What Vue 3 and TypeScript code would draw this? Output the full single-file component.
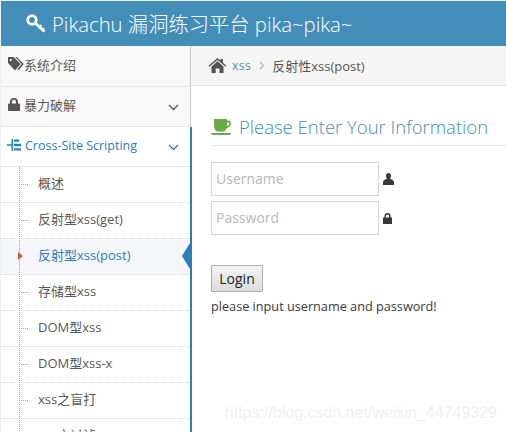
<script setup lang="ts">
interface SubItem { label: string; active?: boolean }
const subItems: SubItem[] = [
  { label: '概述' },
  { label: '反射型xss(get)' },
  { label: '反射型xss(post)', active: true },
  { label: '存储型xss' },
  { label: 'DOM型xss' },
  { label: 'DOM型xss-x' },
  { label: 'xss之盲打' },
  { label: 'xss之过滤' },
]
</script>

<template>
  <div class="page">
    <header class="topbar">
      <svg class="key" viewBox="0 0 20 19" width="20" height="19">
        <circle cx="6" cy="6" r="4.300" fill="none" stroke="#fff" stroke-width="2.800"/>
        <path fill="none" stroke="#fff" stroke-width="3" d="M9 9l9.500 8.500"/>
        <path fill="none" stroke="#fff" stroke-width="2" d="M13 13.500l2.500-2.500M16 16l2-2"/>
      </svg>
      <span class="brand">Pikachu 漏洞练习平台 pika~pika~</span>
    </header>
    <div class="body">
      <aside class="sidebar">
        <div class="nav-row">
          <svg class="nav-icon" viewBox="0 0 16 14" width="16" height="14">
            <path fill="#555" fill-rule="evenodd" d="M0 0h5.600l7 7-5.600 6.500L0 6zM2.800 2a1.100 1.100 0 1 0 0 2.200 1.100 1.100 0 0 0 0-2.200z"/>
            <path fill="#555" d="M7.300 0h1.500l7 7-5.200 6.200-1.200-.9L13.700 7z"/>
          </svg>
          <span>系统介绍</span>
        </div>
        <div class="nav-row">
          <svg class="nav-icon lock" viewBox="0 0 12 13" width="12" height="13">
            <path fill="#555" fill-rule="evenodd" d="M2 5.500V3.800a4 3.800 0 0 1 8 0v1.700h1.100c.5 0 .9.400.9.900v5.700c0 .5-.4.900-.9.900H.9a.9.9 0 0 1-.9-.9V6.400c0-.5.400-.9.900-.9zm2 0h4V3.800a2 2 0 0 0-4 0z"/>
          </svg>
          <span>暴力破解</span>
          <svg class="chev" viewBox="0 0 11 7" width="11" height="7"><path fill="none" stroke="#555" stroke-width="1.300" d="M1 1l4.500 4.500L10 1"/></svg>
        </div>
        <div class="main-col">
          <div class="nav-row open">
            <svg class="nav-icon tree" viewBox="0 0 14 12" width="14" height="12">
              <path fill="#2b7dbc" d="M4.500 0h1.600v12H4.500zM0 5.300h4.500v1.400H0zM7 .5h5v2.300H7zM7 4.800h7v2.400H7zM7 9.200h7v2.400H7z"/>
            </svg>
            <span>Cross-Site Scripting</span>
            <svg class="chev" viewBox="0 0 11 7" width="11" height="7"><path fill="none" stroke="#2b7dbc" stroke-width="1.300" d="M1 1l4.500 4.500L10 1"/></svg>
          </div>
          <ul class="submenu">
            <li v-for="item in subItems" :key="item.label" class="sub" :class="{ active: item.active }">
              <i class="tick"></i>
              <i v-if="item.active" class="arrow"></i>
              <span>{{ item.label }}</span>
              <i v-if="item.active" class="notch"></i>
            </li>
          </ul>
        </div>
      </aside>
      <main class="content">
        <div class="crumbs">
          <svg class="home" viewBox="0 0 18 15" width="19" height="15">
            <path fill="#555" d="M9 0l3 2.600V1h2.400v3.700L18 7.800l-.9 1L9 1.900.9 8.800l-.9-1z"/>
            <path fill="#555" d="M9 3.300l6 5.100V15h-4v-4.500H7.200V15H3V8.400z"/>
          </svg>
          <a class="crumb-link">xss</a>
          <svg class="sep" viewBox="0 0 6 9" width="6" height="9"><path fill="none" stroke="#b2b6bf" stroke-width="1.300" d="M1 1l3.500 3.500L1 8"/></svg>
          <span class="crumb-cur">反射性xss(post)</span>
        </div>
        <section class="panel">
          <h2 class="title">
            <svg class="cup" viewBox="0 0 20 16" width="20" height="16">
              <path fill="#69aa46" fill-rule="evenodd" d="M3 0h13v1.500h1.500C19 1.500 20 3 20 4.500c0 1.800-1 3-4.500 5-.6 1.400-1.500 2.500-2.500 3H6C4 11.500 3 9 3 6zM16 3.500v3.800c1.500-.8 2.300-1.800 2.300-2.700 0-.7-.8-1.300-2.300-1.100z"/>
              <path fill="#69aa46" d="M0 14h20v1l-2 1H2l-2-1z"/>
            </svg>
            <span>Please Enter Your Information</span>
          </h2>
          <form class="form" @submit.prevent>
            <div class="field">
              <input placeholder="Username" />
              <svg viewBox="0 0 11 12" width="11" height="12"><path fill="#393939" d="M5.500 0C7 0 8 1.200 8 2.700 8 4 7.500 5 7 5.600c.5.900 4 1.200 4 4.100V12H0V9.700c0-2.900 3.500-3.200 4-4.100C3.500 5 3 4 3 2.700 3 1.200 4 0 5.500 0z"/></svg>
            </div>
            <div class="field">
              <input placeholder="Password" />
              <svg viewBox="0 0 9 11" width="9" height="11"><path fill="#393939" fill-rule="evenodd" d="M1.500 4.500V3a3 3 0 0 1 6 0v1.500H9V11H0V4.500zm1.500 0h3V3a1.500 1.500 0 0 0-3 0z"/></svg>
            </div>
            <button class="login" type="submit">Login</button>
            <p class="hint">please input username and password!</p>
          </form>
        </section>
        <div class="mark">https://blog.csdn.net/weixin_44749329</div>
      </main>
    </div>
  </div>
</template>

<style>
html, body { margin: 0; background: #fff; overflow: hidden; }
</style>

<style scoped>
.page {
  width: 506px;
  height: 432px;
  overflow: hidden;
  padding: 1px 0 0 1px;
  box-sizing: border-box;
  font-family: "Open Sans", "Noto Sans CJK SC", sans-serif;
  font-size: 13px;
  color: #585858;
  background: #f0f0f0;
}
.topbar {
  height: 45px;
  background: #438eb9;
  display: flex;
  align-items: center;
  padding-left: 25px;
  gap: 6px;
  color: #fff;
}
.key { margin-top: -1px; }
.brand { font-size: 20.300px; line-height: 24px; white-space: nowrap; font-weight: 300; }
.body { display: flex; height: 386px; background: #fff; }
.sidebar { width: 189px; flex: none; background: #f8f8f8; border-right: 1px solid #ccc; position: relative; z-index: 1; }
.nav-row {
  border-bottom: 1px solid #e5e5e5;
  display: flex;
  align-items: center;
  padding: 0 0 5px 7px;
  height: 34px;
  position: relative;
  white-space: nowrap;
}
.nav-row:first-child { border-top: 1px solid #f8f8f8; }
.nav-icon { flex: none; }
.nav-icon.lock { margin-right: 4px; }
.chev { position: absolute; left: 167px; top: 17px; }
.main-col { background: #fff; margin-right: -2px; border-right: 2px solid #2b7dbc; height: 306px; overflow: hidden; }
.nav-row.open { color: #2b7dbc; font-size: 12.500px; padding: 0 0 3px 6px; height: 36px; border-top: 0; }
.nav-row.open .nav-icon { margin-right: 4px; }
.submenu {
  list-style: none;
  margin: 0;
  padding: 0;
  position: relative;
}
.submenu::before {
  content: "";
  position: absolute;
  left: 18px;
  top: 0;
  bottom: 0;
  border-left: 1px dotted #7eb0d3;
  z-index: 1;
}
.sub {
  height: 30px;
  padding: 0 0 5px 37px;
  border-bottom: 1px dotted #dcdcdc;
  display: flex;
  align-items: center;
  position: relative;
  white-space: nowrap;
  font-size: 13px;
}
.sub.active { background: #f4f6f9; color: #2b7dbc; }
.tick {
  position: absolute;
  left: 20px;
  top: 17px;
  width: 7px;
  border-top: 1px dotted #7eb0d3;
}
.sub.active .tick { display: none; }
.arrow {
  position: absolute;
  left: 17px;
  top: 13px;
  border-left: 5px solid #c86139;
  border-top: 4px solid transparent;
  border-bottom: 4px solid transparent;
  z-index: 2;
}
.notch {
  position: absolute;
  right: 0;
  top: 4px;
  border-right: 8px solid #2b7dbc;
  border-top: 13px solid transparent;
  border-bottom: 13px solid transparent;
}
.content { flex: 1; min-width: 0; position: relative; }
.crumbs {
  height: 39px;
  background: #f5f5f5;
  border-bottom: 1px solid #e5e5e5;
  display: flex;
  align-items: center;
  padding-left: 17px;
  white-space: nowrap;
  font-size: 13px;
}
.crumb-link { color: #4c8fbd; margin-left: 5px; font-size: 12px; letter-spacing: .5px; }
.sep { margin: 0 7px 0 8px; }
.crumb-cur { color: #555; }
.panel { padding: 0 0 0 20px; }
.title {
  margin: 0 0 16px;
  height: 53px;
  display: flex;
  align-items: flex-end;
  gap: 8px;
  padding-bottom: 6px;
  box-sizing: content-box;
  border-bottom: 1px solid #dce4ea;
  font-size: 18.500px;
  line-height: 24px;
  font-weight: 300;
  color: #438eb9;
  white-space: nowrap;
}
.cup { margin: 0 0 4px 0; }
.form { display: flex; flex-direction: column; align-items: flex-start; }
.field { display: flex; align-items: center; gap: 4px; margin-bottom: 5px; }
.field input {
  width: 168px;
  height: 34px;
  box-sizing: border-box;
  border: 1px solid #d5d5d5;
  padding: 0 4px 2px;
  font: 14px "Open Sans", sans-serif;
  color: #555;
  outline: none;
  background: #fff;
}
.field input::placeholder { color: #b8b8b8; opacity: 1; }
.login {
  margin-top: 25px;
  width: 52px;
  height: 27px;
  padding: 0;
  border: 1px solid #adadad;
  border-radius: 1px;
  background: linear-gradient(#f4f4f4, #dcdcdc);
  font: 14px "Open Sans", sans-serif;
  color: #222;
}
.hint { margin: 5px 0 0; font-size: 12.700px; color: #393939; line-height: 18px; white-space: nowrap; }
.mark {
  position: absolute;
  right: 9px;
  top: 358px;
  font: 16px "Liberation Sans", sans-serif;
  color: #efefef;
  white-space: nowrap;
}
</style>
